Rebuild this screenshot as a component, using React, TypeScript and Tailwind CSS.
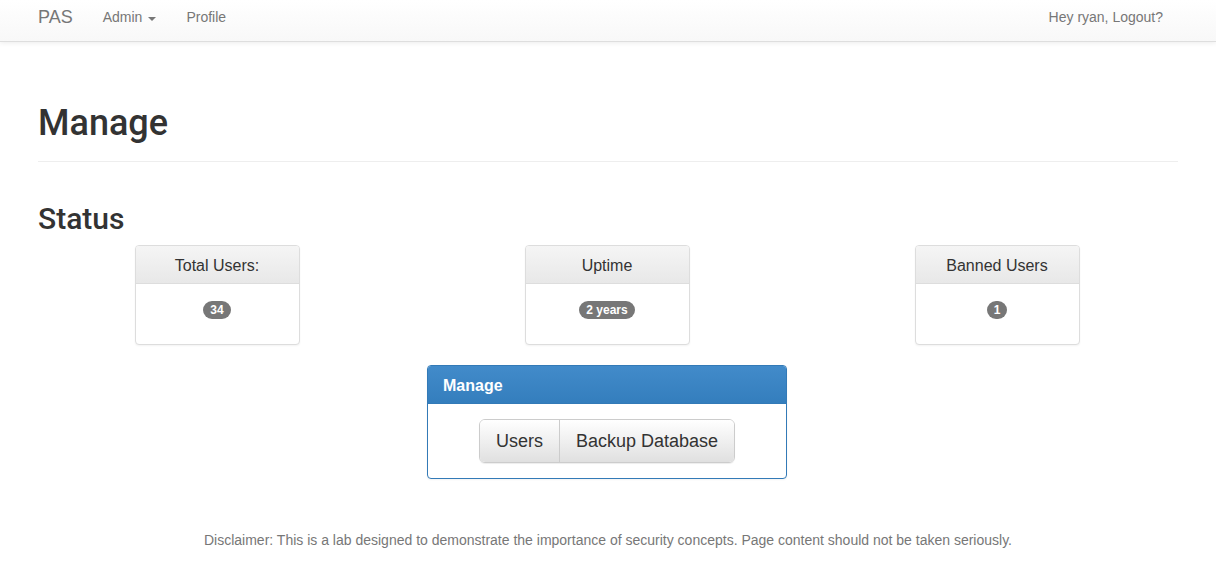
import React from 'react';

const stats = [
  { title: 'Total Users:', value: '34' },
  { title: 'Uptime', value: '2 years' },
  { title: 'Banned Users', value: '1' },
];

function StatPanel({ title, value }: { title: string; value: string }) {
  return (
    <div className="flex justify-center">
      <div className="w-[165px] rounded-[4px] border border-[#dddddd] bg-white shadow-[0_1px_2px_rgba(0,0,0,0.05)] overflow-hidden">
        <div className="h-[38px] pt-[3px] flex items-center justify-center border-b border-[#dddddd] bg-gradient-to-b from-[#f5f5f5] to-[#e8e8e8] text-[16px] text-[#333333]">
          {title}
        </div>
        <div className="h-[60px] pt-[17px] flex justify-center">
          <span className="h-[18px] inline-flex items-center rounded-[10px] bg-[#777777] px-[7px] text-[12px] font-bold leading-none text-white">
            {value}
          </span>
        </div>
      </div>
    </div>
  );
}

export default function App() {
  return (
    <div className="min-h-screen bg-white font-['Liberation_Sans',Arial,sans-serif] text-[14px] text-[#333333]">
      {/* navbar */}
      <div className="h-[42px] border-b border-[#dedede] bg-gradient-to-b from-white to-[#f8f8f8] shadow-[0_1px_5px_rgba(0,0,0,0.08)]">
        <div className="mx-auto w-[1170px] px-[15px] h-full flex items-center justify-between">
          <div className="flex items-center -mt-[6px]">
            <span className="text-[18px] text-[#777777]">PAS</span>
            <span className="ml-[30px] flex items-center text-[#777777]">
              Admin
              <span className="ml-[6px] mt-[2px] border-x-[4px] border-t-[4px] border-x-transparent border-t-[#777777]" />
            </span>
            <span className="ml-[30px] text-[#777777]">Profile</span>
          </div>
          <span className="-mt-[6px] pr-[15px] text-[#777777]">Hey ryan, Logout?</span>
        </div>
      </div>

      <div className="mx-auto w-[1170px] px-[15px]">
        <div className="mt-[62px] pb-[17px] border-b border-[#eeeeee]">
          <h1 className="font-['Roboto','Liberation_Sans',sans-serif] text-[36px] leading-[1.1] font-medium">Manage</h1>
        </div>

        <h2 className="mt-[40px] font-['Roboto','Liberation_Sans',sans-serif] text-[30px] leading-[1.1] font-medium">Status</h2>

        <div className="-ml-[1px] mr-[1px]">
          <div className="mt-[10px] grid grid-cols-3 gap-[30px]">
            {stats.map((s) => (
              <StatPanel key={s.title} title={s.title} value={s.value} />
            ))}
          </div>

          <div className="mt-[20px] flex justify-center">
            <div className="w-[360px] rounded-[4px] border border-[#337ab7] bg-white overflow-hidden shadow-[0_1px_2px_rgba(0,0,0,0.05)]">
              <div className="h-[38px] pt-[3px] flex items-center px-[15px] border-b border-[#337ab7] bg-gradient-to-b from-[#428bca] to-[#347ebd] text-[16px] font-bold text-white">
                Manage
              </div>
              <div className="pt-[15px] pb-[15px] flex justify-center">
                <div className="flex h-[44px] rounded-[6px] border border-[#cccccc] overflow-hidden shadow-[0_1px_1px_rgba(0,0,0,0.075)]">
                  <button className="px-[16px] pt-[2px] text-[18px] text-[#333333] bg-gradient-to-b from-white to-[#e0e0e0] border-r border-[#cccccc]">
                    Users
                  </button>
                  <button className="px-[16px] pt-[2px] text-[18px] text-[#333333] bg-gradient-to-b from-white to-[#e0e0e0]">
                    Backup Database
                  </button>
                </div>
              </div>
            </div>
          </div>
        </div>

        <p className="mt-[51px] text-center text-[#777777]">
          Disclaimer: This is a lab designed to demonstrate the importance of security concepts. Page content should not be taken seriously.
        </p>
      </div>
    </div>
  );
}
